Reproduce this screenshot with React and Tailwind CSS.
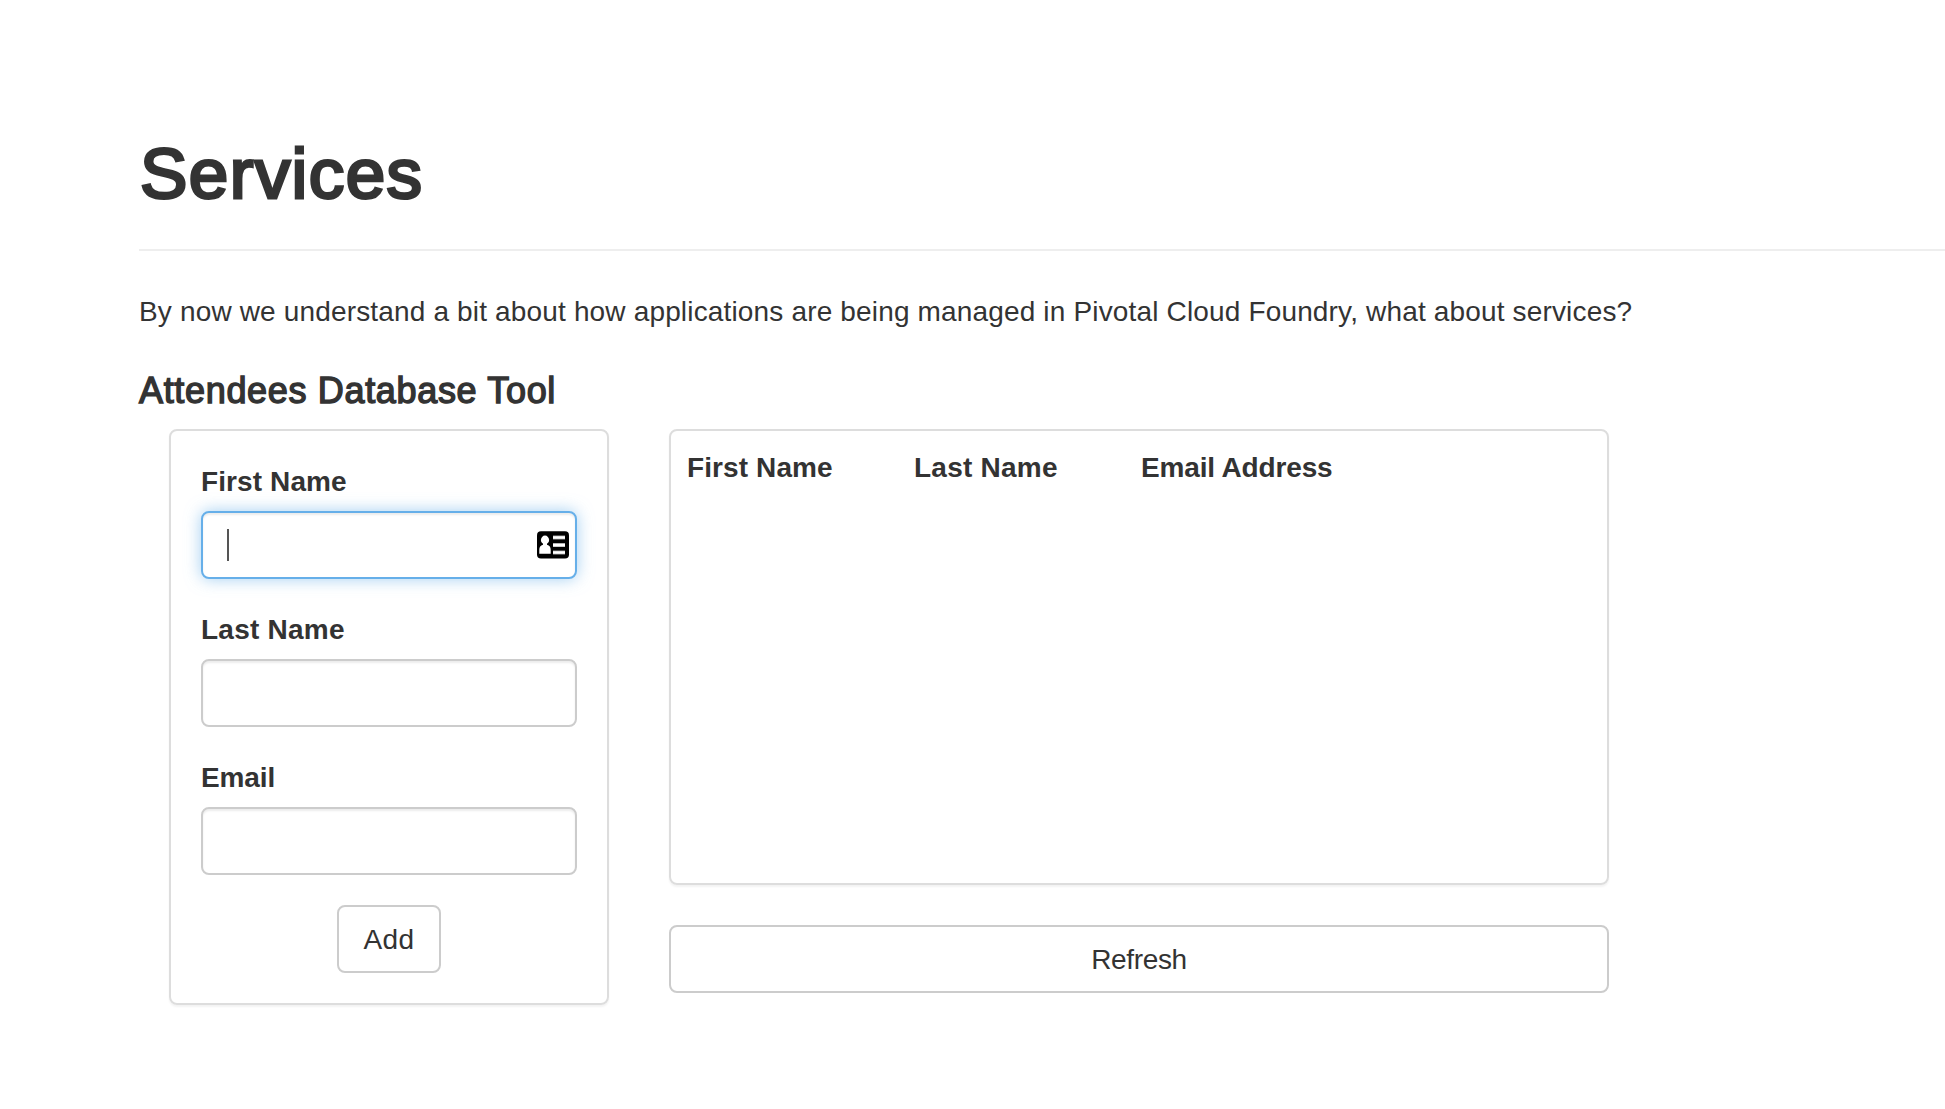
function CardIcon() {
  return (
    <svg width="32" height="28" viewBox="0 0 32 28" aria-hidden="true">
      <rect y="0.3" width="32" height="27.2" rx="4" fill="#000" />
      <ellipse cx="8" cy="9" rx="4.1" ry="4.4" fill="#fff" />
      <path d="M6 12h4v1.8c2.6.6 3.700 2.500 3.700 5v4h-11.400v-4c0-2.500 1.100-4.400 3.700-5z" fill="#fff" />
      <path d="M16 6.500h12M16 14.100h12M16 21.500h12" stroke="#999" strokeWidth="4" />
      <path d="M16 6.500h12M16 14.100h12M16 21.500h12" stroke="#fff" strokeWidth="2.600" />
    </svg>
  );
}

function Field({ label, tracking, focused }) {
  return (
    <div className="mb-[30px]">
      <div className={`h-[50px] pt-px font-bold ${tracking}`}>{label}</div>
      {focused ? (
        <div className="flex h-[68px] w-full items-center justify-between rounded-lg border-2 border-[#66afe9] bg-white pr-[6px] pl-[24px] shadow-[inset_0_2px_2px_rgba(0,0,0,0.075),0_0_16px_rgba(102,175,233,0.6)]">
          <span className="h-[32px] w-[2px] bg-[#555]" />
          <CardIcon />
        </div>
      ) : (
        <div className="h-[68px] w-full rounded-lg border-2 border-[#ccc] bg-white shadow-[inset_0_2px_2px_rgba(0,0,0,0.075)]" />
      )}
    </div>
  );
}

export default function App() {
  return (
    <main className="h-[1109px] w-full overflow-hidden bg-white pl-[139px] font-['Liberation_Sans',Arial,sans-serif] text-[28px] leading-[40px] text-[#333]">
      <header className="h-[251px] border-b-2 border-[#eee] pt-[134px]">
        <h1 className="pl-px text-[71px] leading-[79px] font-normal tracking-[1.4px] [-webkit-text-stroke:3px_#333]">Services</h1>
      </header>
      <p className="mt-[41px] tracking-[0.16px]">By now we understand a bit about how applications are being managed in Pivotal Cloud Foundry, what about services?</p>
      <h2 className="mt-[39px] text-[36px] leading-[40px] font-normal tracking-[0.67px] [-webkit-text-stroke:1.4px_#333]">Attendees Database Tool</h2>
      <div className="mt-[18px] flex gap-[60px] pl-[30px]">
        <section className="h-[576px] w-[440px] rounded-lg border-2 border-[#ddd] px-[30px] pt-[30px] shadow-[0_2px_2px_rgba(0,0,0,0.05)]">
          <Field label="First Name" tracking="tracking-[0.1px]" focused />
          <Field label="Last Name" tracking="tracking-[0.24px]" />
          <Field label="Email" tracking="tracking-[-0.1px]" />
          <button className="mx-auto block h-[68px] w-[104px] rounded-lg border-2 border-[#ccc] pt-[2px] tracking-[0.4px]">Add</button>
        </section>
        <div className="w-[940px]">
          <section className="flex h-[456px] rounded-lg border-2 border-[#ddd] px-[16px] pt-[17px] font-bold shadow-[0_2px_2px_rgba(0,0,0,0.05)]">
            <span className="w-[227px] tracking-[0.1px]">First Name</span>
            <span className="w-[227px] tracking-[0.24px]">Last Name</span>
            <span className="tracking-[-0.15px]">Email Address</span>
          </section>
          <button className="mt-[40px] block h-[68px] w-full rounded-lg border-2 border-[#ccc] pt-[2px] tracking-[-0.35px]">Refresh</button>
        </div>
      </div>
    </main>
  );
}
